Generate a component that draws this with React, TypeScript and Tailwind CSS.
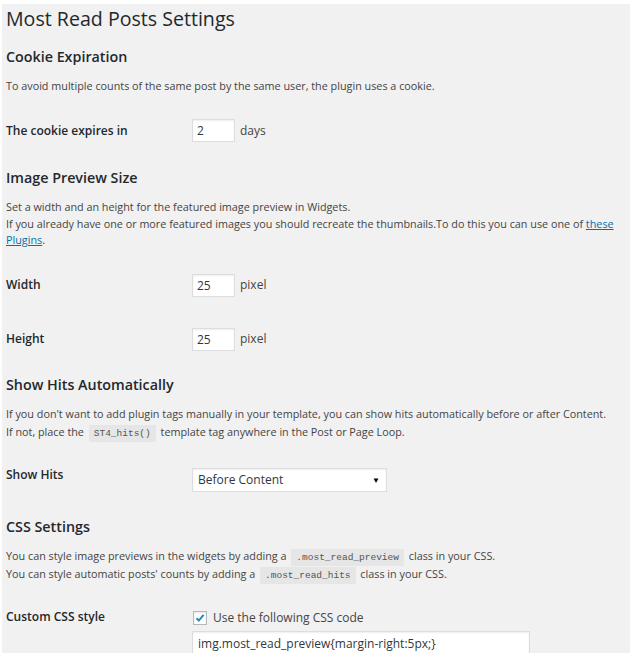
import React from 'react';

const font = "font-['Open_Sans','Liberation_Sans',sans-serif]";

function Code({ children }: { children: React.ReactNode }) {
  return (
    <code className="bg-[#e6e6e6] px-[5px] py-[3px] mx-[2px] font-['Liberation_Mono','DejaVu_Sans_Mono',monospace] text-[9.5px] leading-none text-[#555]">
      {children}
    </code>
  );
}

function TextInput({ value, unit }: { value: string; unit: string }) {
  return (
    <div className="flex items-center">
      <div className="w-[43px] h-[23px] bg-white border border-[#ddd] shadow-[inset_0_1px_2px_rgba(0,0,0,0.07)] pl-[4px] text-[12px] leading-[21px] text-[#32373c]">
        {value}
      </div>
      <span className="ml-[5px] text-[12px] text-[#444]">{unit}</span>
    </div>
  );
}

function Heading({ children, className }: { children: React.ReactNode; className: string }) {
  return <h2 className={`text-[14.3px] leading-[20px] font-semibold text-[#23282d] ${className}`}>{children}</h2>;
}

function Label({ children }: { children: React.ReactNode }) {
  return <div className="w-[186px] shrink-0 text-[12px] font-semibold text-[#23282d]">{children}</div>;
}

export default function App() {
  return (
    <div className={`bg-white pt-[4px] pl-[2px] pr-[4px] w-[634px] h-[653px] overflow-hidden ${font}`}>
      <div className="bg-[#f1f1f1] h-full pl-[4px]">
        <h1 className="text-[19.6px] leading-[30px] font-normal text-[#23282d]">Most Read Posts Settings</h1>

        <Heading className="mt-[13px]">Cookie Expiration</Heading>
        <p className="mt-[11px] text-[10.8px] leading-[16px] text-[#444]">
          To avoid multiple counts of the same post by the same user, the plugin uses a cookie.
        </p>
        <div className="mt-[25px] flex items-center">
          <Label>The cookie expires in</Label>
          <TextInput value="2" unit="days" />
        </div>

        <Heading className="mt-[26px]">Image Preview Size</Heading>
        <p className="mt-[11px] text-[10.8px] leading-[16.5px] text-[#444]">
          Set a width and an height for the featured image preview in Widgets.
          <br />
          If you already have one or more featured images you should recreate the thumbnails.To do this you can use one of{' '}
          <a className="text-[#0073aa] underline">these Plugins</a>.
        </p>
        <div className="mt-[25px] flex items-center">
          <Label>Width</Label>
          <TextInput value="25" unit="pixel" />
        </div>
        <div className="mt-[31px] flex items-center">
          <Label>Height</Label>
          <TextInput value="25" unit="pixel" />
        </div>

        <Heading className="mt-[24px]">Show Hits Automatically</Heading>
        <p className="mt-[10px] text-[10.8px] leading-[18px] text-[#444]">
          If you don't want to add plugin tags manually in your template, you can show hits automatically before or after Content.
          <br />
          If not, place the <Code>ST4_hits()</Code> template tag anywhere in the Post or Page Loop.
        </p>
        <div className="mt-[27px] flex items-start">
          <div className="w-[186px] shrink-0 text-[12px] leading-[14px] font-semibold text-[#23282d]">Show Hits</div>
          <div className="w-[195px] h-[24px] bg-white border border-[#ddd] shadow-[inset_0_1px_2px_rgba(0,0,0,0.07)] flex items-center justify-between pl-[5px] pr-[6px]">
            <span className="text-[12px] text-[#32373c] mt-[1px]">Before Content</span>
            <span className="text-[8px] text-black">▼</span>
          </div>
        </div>

        <Heading className="mt-[25px]">CSS Settings</Heading>
        <p className="mt-[10px] text-[10.8px] leading-[18px] text-[#444]">
          You can style image previews in the widgets by adding a <Code>.most_read_preview</Code> class in your CSS.
          <br />
          You can style automatic posts' counts by adding a <Code>.most_read_hits</Code> class in your CSS.
        </p>
        <div className="mt-[26px] flex items-start">
          <div className="w-[186px] shrink-0 text-[12px] leading-[16px] font-semibold text-[#23282d]">Custom CSS style</div>
          <div className="flex flex-col">
            <div className="flex items-center h-[18px]">
              <span className="ml-[1px] w-[14px] h-[14px] bg-white border border-[#b4b9be] shadow-[inset_0_1px_2px_rgba(0,0,0,0.1)] flex items-center justify-center">
                <svg width="12" height="12" viewBox="0 0 12 12">
                  <path d="M2.5 6.3 L4.8 8.6 L9.6 2.8" fill="none" stroke="#1e8cbe" strokeWidth="2" />
                </svg>
              </span>
              <span className="ml-[6px] text-[12px] text-[#444]">Use the following CSS code</span>
            </div>
            <div className="mt-[4px] w-[338px] h-[40px] bg-white border border-[#ddd] shadow-[inset_0_1px_2px_rgba(0,0,0,0.07)] px-[5px] pt-[3px] text-[12px] text-[#32373c]">
              img.most_read_preview{'{'}margin-right:5px;{'}'}
            </div>
          </div>
        </div>
      </div>
    </div>
  );
}
